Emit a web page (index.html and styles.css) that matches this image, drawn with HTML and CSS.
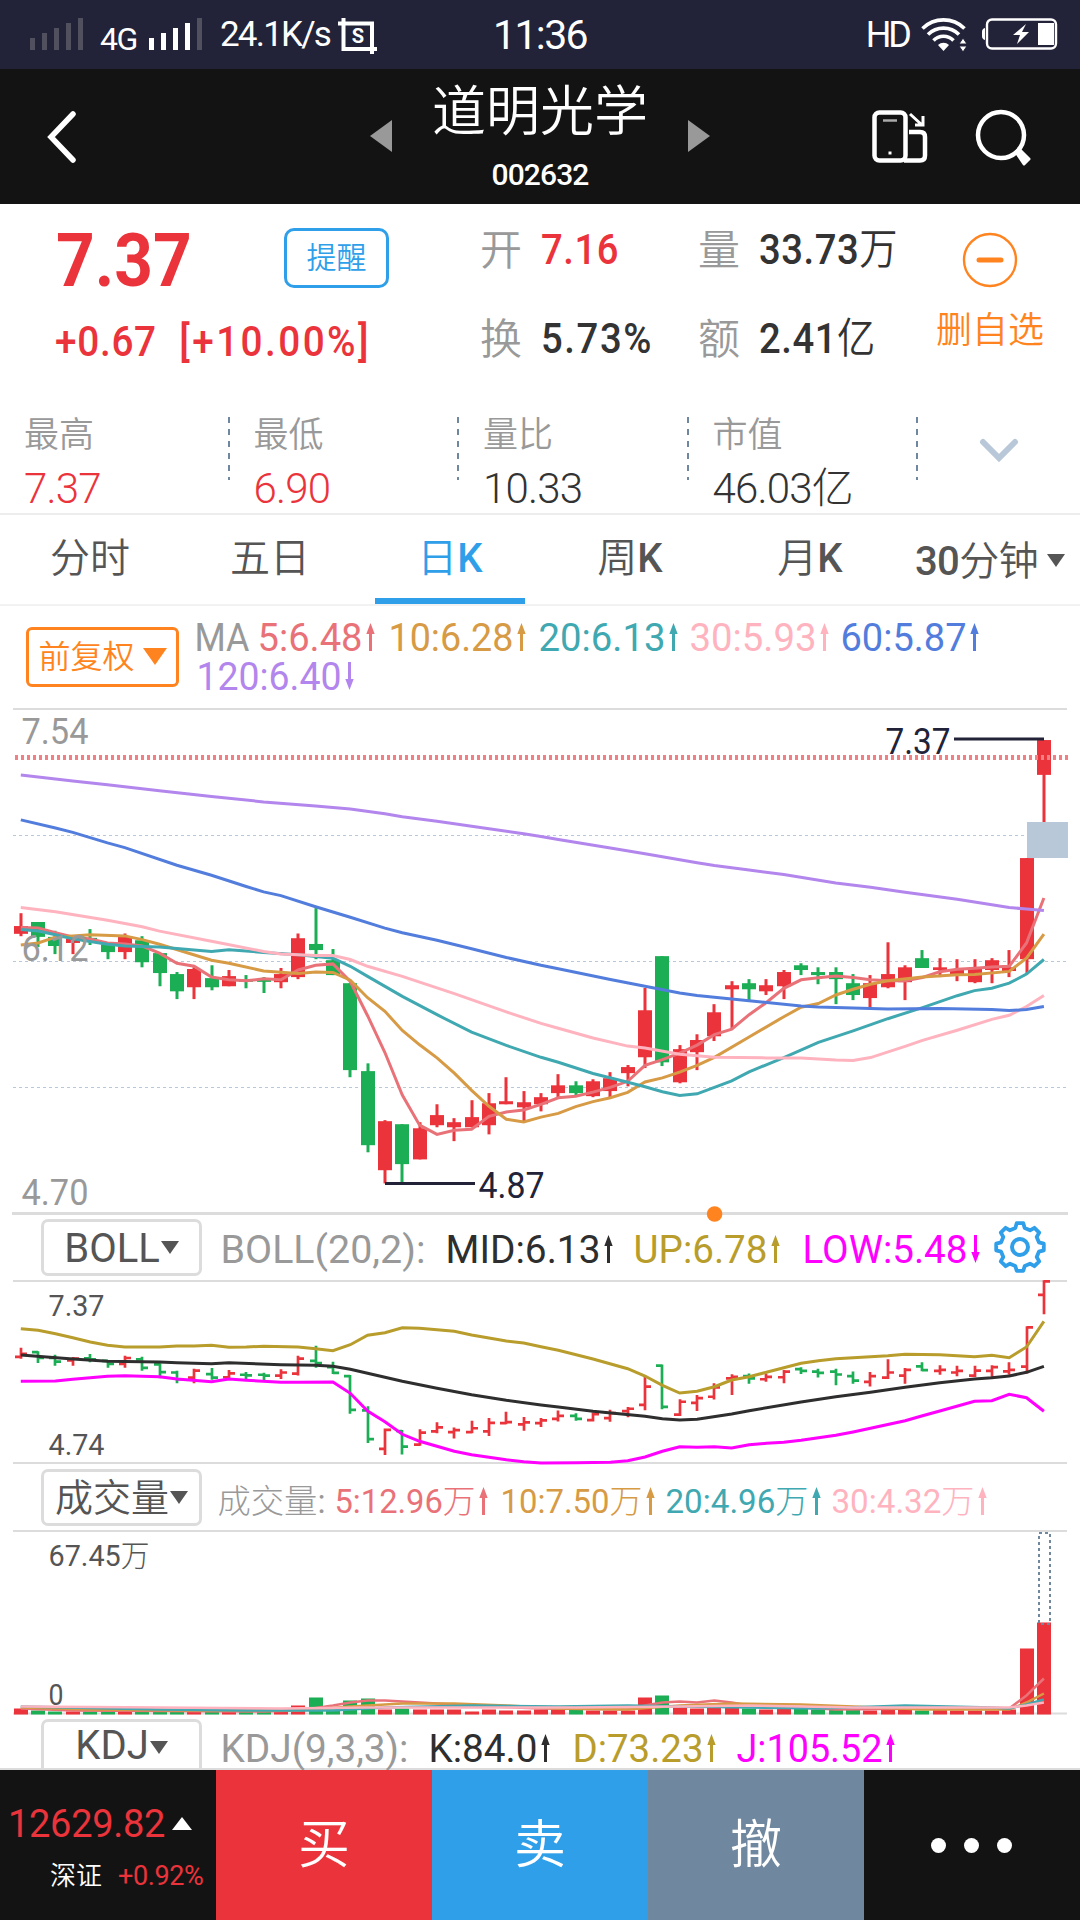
FILE: index.html
```html
<!DOCTYPE html>
<html lang="zh-CN">
<head>
    <meta charset="UTF-8">
    <meta name="viewport" content="width=device-width, initial-scale=1.0">
    <title>道明光学 002632</title>
    <link rel="stylesheet" href="styles.css">
</head>
<body>
    <div class="status-bar">
        <div class="status-left">
            <div class="signal off"><i></i><i></i><i></i><i></i><i></i></div>
            <span class="net">4G</span>
            <div class="signal"><i></i><i></i><i></i><i></i><i class="dim"></i></div>
            <span class="speed">24.1K/s</span>
            <svg class="crop-icon" width="40" height="36" viewBox="0 0 40 36">
                <path d="M0 5.500H34V36M5.500 0V31H39" fill="none" stroke="#fff" stroke-width="4"/>
                <text x="20" y="25" text-anchor="middle">S</text>
            </svg>
        </div>
        <span class="clock">11:36</span>
        <div class="status-right">
            <span class="hd">HD</span>
            <svg width="48" height="34" viewBox="0 0 48 34">
                <g fill="none" stroke="#fff" stroke-width="3.6">
                    <path d="M1.500 10.500a30 30 0 0 1 42 0"/>
                    <path d="M7 16.500a22 22 0 0 1 31 0"/>
                    <path d="M12.500 22.500a14 14 0 0 1 20 0"/>
                </g>
                <path d="M17 27a8 8 0 0 1 11 0l-5.500 6z" fill="#fff"/>
                <path d="M38 26l4-6 4 6zM38 28h8l-4 6z" fill="#fff" stroke="#222238" stroke-width="1"/>
            </svg>
            <svg width="77" height="32" viewBox="0 0 77 32">
                <rect x="6" y="1.500" width="69" height="29" rx="5" fill="none" stroke="#fff" stroke-width="2.400"/>
                <path d="M4 10v12a4 4 0 0 1-3-4v-4a4 4 0 0 1 3-4z" fill="#fff"/>
                <path d="M45 6L32 17h7l-3 9 12-12h-7z" fill="#fff"/>
                <rect x="57" y="5" width="16" height="22" fill="#fff"/>
            </svg>
        </div>
    </div>

    <header class="title-bar">
        <svg class="back" width="34" height="54" viewBox="0 0 34 54"><path d="M28 4L6 27l22 23" fill="none" stroke="#fff" stroke-width="5.500" stroke-linecap="round"/></svg>
        <div class="stock-switch">
            <svg width="22" height="32" viewBox="0 0 22 32"><path d="M0 16L22 0v32z" fill="#999"/></svg>
            <div class="stock-title">
                <h1>道明光学</h1>
                <span class="code">002632</span>
            </div>
            <svg width="22" height="32" viewBox="0 0 22 32"><path d="M22 16L0 0v32z" fill="#999"/></svg>
        </div>
        <div class="tools">
            <svg width="56" height="54" viewBox="0 0 56 54" fill="none" stroke="#fff" stroke-width="4.500">
                <rect x="2.500" y="2.500" width="31" height="48" rx="5"/>
                <path d="M37 22h11q5 0 5 5v18.500q0 5-5 5H32"/>
                <path d="M38 4l12 11M43 15h8V6" stroke-width="3"/>
                <path d="M11 10.500h14" stroke="#aaa" stroke-width="2.500"/>
                <path d="M16.500 43h3" stroke-width="3"/>
            </svg>
            <svg width="58" height="58" viewBox="0 0 58 58">
                <circle cx="25" cy="25" r="23" fill="none" stroke="#fff" stroke-width="4.500"/>
                <path d="M40 42l3-3 10 10-5 5z" fill="#fff" stroke="#fff" stroke-width="3" stroke-linejoin="round"/>
            </svg>
        </div>
    </header>

    <section class="quote">
        <div class="quote-main">
            <div class="price-box">
                <div class="price-line">
                    <span class="price num">7.37</span>
                    <button class="remind">提醒</button>
                </div>
                <div class="change num"><span>+0.67</span><span class="pct">[+10.00%]</span></div>
            </div>
            <dl class="facts">
                <dt>开</dt><dd class="red">7.16</dd>
                <dt>量</dt><dd>33.73<b>万</b></dd>
                <dt>换</dt><dd>5.73%</dd>
                <dt>额</dt><dd>2.41<b>亿</b></dd>
            </dl>
            <div class="remove">
                <svg width="56" height="56" viewBox="0 0 56 56"><circle cx="28" cy="28" r="26" fill="none" stroke="#ff8420" stroke-width="2.400"/><path d="M17 28h22" stroke="#ff8420" stroke-width="5" stroke-linecap="round"/></svg>
                <span>删自选</span>
            </div>
        </div>
        <div class="quote-more">
            <div class="more-item"><span>最高</span><em class="red">7.37</em></div>
            <div class="more-item"><span>最低</span><em class="red">6.90</em></div>
            <div class="more-item"><span>量比</span><em>10.33</em></div>
            <div class="more-item"><span>市值</span><em>46.03亿</em></div>
            <svg class="expand" width="40" height="26" viewBox="0 0 40 26"><path d="M4 4l16 16L36 4" fill="none" stroke="#b9c8d8" stroke-width="6" stroke-linecap="round"/></svg>
        </div>
    </section>

    <nav class="tabs">
        <a>分时</a>
        <a>五日</a>
        <a class="active">日<b>K</b></a>
        <a>周<b>K</b></a>
        <a>月<b>K</b></a>
        <a class="period"><b>30</b>分钟<i class="caret"></i></a>
    </nav>

    <main>
        <div class="ma-row">
            <button class="adjust">前复权<i class="caret"></i></button>
            <svg id="maLegend" width="890" height="102" viewBox="190 606 890 102"></svg>
        </div>
        <svg id="kline" width="1080" height="509" viewBox="0 708 1080 509"></svg>

        <div class="ind-row">
            <button class="ind-select">BOLL<i class="caret"></i></button>
            <svg id="bollLegend" width="870" height="63" viewBox="210 1217 870 63"></svg>
        </div>
        <svg id="boll" width="1080" height="187" viewBox="0 1280 1080 187"></svg>

        <div class="ind-row">
            <button class="ind-select zh">成交量<i class="caret"></i></button>
            <svg id="volLegend" width="870" height="63" viewBox="210 1467 870 63"></svg>
        </div>
        <svg id="volume" width="1080" height="187" viewBox="0 1530 1080 187"></svg>

        <div class="ind-row last">
            <button class="ind-select">KDJ<i class="caret"></i></button>
            <svg id="kdjLegend" width="870" height="51" viewBox="210 1717 870 51"></svg>
        </div>
    </main>

    <footer class="trade-bar">
        <div class="index">
            <div class="index-value"><span>12629.82</span><i></i></div>
            <div class="index-name"><span>深证</span><em>+0.92%</em></div>
        </div>
        <button class="buy">买</button>
        <button class="sell">卖</button>
        <button class="cancel">撤</button>
        <div class="dots"><i></i><i></i><i></i></div>
    </footer>

    <script src="chart.js"></script>
</body>
</html>
```
FILE: styles.css
```css
* {
    box-sizing: border-box;
}
body {
    margin: 0;
    width: 1080px;
    height: 1920px;
    overflow: hidden;
    background: #fff;
    color: #333;
    font-family: Roboto, "Noto Sans CJK SC", sans-serif;
}
svg {
    display: block;
    flex: none;
    overflow: visible;
}
button {
    margin: 0;
    padding: 0;
    border: 0;
    background: none;
    font-family: inherit;
    font-weight: 350;
}
i, em {
    font-style: normal;
}
.red {
    color: #eb333b;
}
.caret {
    display: inline-block;
    border: 9px solid transparent;
    border-top: 13px solid currentColor;
    border-bottom: 0;
}

/* status bar */
.status-bar {
    display: grid;
    grid-template-columns: 1fr auto 1fr;
    height: 69px;
    background: #222238;
    color: #fff;
}
.status-left {
    display: flex;
    padding-left: 30px;
}
.signal {
    display: flex;
    align-items: flex-end;
    gap: 7px;
    height: 50px;
}
.signal i {
    width: 5px;
    height: 12px;
    background: #fff;
}
.signal i:nth-child(2) { height: 17px; }
.signal i:nth-child(3) { height: 22px; }
.signal i:nth-child(4) { height: 27px; }
.signal i:nth-child(5) { height: 32px; }
.signal.off i,
.signal .dim {
    background: #50505f;
}
.net {
    width: 49px;
    margin-left: 17px;
    padding-top: 20px;
    font-size: 32px;
    line-height: 38px;
    letter-spacing: -1.5px;
}
.speed {
    width: 118px;
    margin-left: 18px;
    padding-top: 15px;
    font-size: 35px;
    line-height: 40px;
    letter-spacing: -1.8px;
}
.crop-icon {
    margin-top: 18px;
}
.crop-icon text {
    font-size: 20px;
    font-weight: 700;
    fill: #fff;
}
.clock {
    padding-top: 12px;
    font-size: 41px;
    line-height: 47px;
    letter-spacing: -1.6px;
}
.status-right {
    display: flex;
    justify-content: flex-end;
    padding: 18px 22px 0 0;
    gap: 12px;
}
.hd {
    margin-top: -4px;
    font-size: 36px;
    line-height: 42px;
    letter-spacing: -3px;
}

/* title bar */
.title-bar {
    display: flex;
    justify-content: space-between;
    height: 135px;
    padding: 0 46px 0 45px;
    background: #131313;
    color: #fff;
}
.back {
    margin-top: 41px;
}
.stock-switch {
    display: flex;
    justify-content: space-between;
    width: 340px;
    margin-left: 129px;
}
.stock-switch > svg {
    margin-top: 51px;
}
.stock-title {
    text-align: center;
}
.stock-title h1 {
    margin: 8px 0 0;
    font-size: 54px;
    font-weight: 350;
    line-height: 72px;
}
.code {
    display: block;
    margin-top: 8px;
    font-size: 30px;
    font-weight: 500;
    line-height: 36px;
    letter-spacing: -.9px;
}
.tools {
    display: flex;
    gap: 48px;
    padding-top: 41px;
}

/* quote */
.quote {
    height: 309px;
}
.quote-main {
    display: flex;
    height: 204px;
}
.price-box {
    width: 480px;
    padding: 14px 0 0 56px;
    color: #eb333b;
}
.price-line {
    display: flex;
    height: 84px;
}
.num {
    transform: scaleX(.9);
    transform-origin: 0 50%;
}
.price {
    width: 228px;
    font-size: 75px;
    font-weight: 700;
    line-height: 84px;
}
.remind {
    width: 105px;
    height: 60px;
    margin-top: 10px;
    border: 3px solid #309fea;
    border-radius: 10px;
    color: #309fea;
    font-size: 30px;
    line-height: 52px;
}
.change {
    display: flex;
    margin: 14px 0 0 -1px;
    font-size: 43px;
    font-weight: 500;
    line-height: 50px;
    letter-spacing: .8px;
    white-space: nowrap;
}
.change .pct {
    margin-left: 25px;
    letter-spacing: 2.7px;
}
.facts {
    display: grid;
    grid-template-columns: 61px 157px 61px 161px;
    grid-template-rows: 89px 89px;
    width: 440px;
    margin: 0;
}
.facts dt,
.facts dd {
    margin: 0;
    padding-top: 15px;
    font-size: 42px;
    line-height: 62px;
    white-space: nowrap;
}
.facts dt {
    padding-top: 16px;
    color: #999;
    font-weight: 350;
}
.facts dd {
    font-weight: 500;
    letter-spacing: .6px;
    transform: scaleX(.91);
    transform-origin: 0 50%;
}
.facts b {
    font-weight: 350;
}
.facts dd:nth-of-type(3) {
    letter-spacing: 1.8px;
}
.remove {
    display: flex;
    flex-direction: column;
    align-items: center;
    width: 140px;
    padding-top: 28px;
    color: #ff8420;
    font-size: 36px;
    font-weight: 350;
    line-height: 52px;
}
.remove span {
    margin-top: 17px;
}
.quote-more {
    display: flex;
    height: 105px;
}
.more-item {
    width: 229.500px;
    height: 73px;
    padding-left: 24px;
    background: repeating-linear-gradient(#70889f 0 6px, transparent 6px 12px) 100% 9px / 2px 63px no-repeat;
}
.more-item span {
    display: block;
    padding-top: 4px;
    color: #999;
    font-size: 35px;
    font-weight: 350;
    line-height: 48px;
}
.more-item em {
    display: block;
    padding-top: 2px;
    font-size: 42px;
    font-weight: 300;
    line-height: 54px;
    letter-spacing: -.8px;
    white-space: nowrap;
}
.expand {
    margin: 30px 0 0 61px;
}

/* period tabs */
.tabs {
    display: flex;
    height: 93px;
    border-top: 2px solid #ededed;
    border-bottom: 2px solid #f2f2f2;
    color: #555;
}
.tabs a {
    display: flex;
    justify-content: center;
    width: 180px;
    padding-top: 12px;
    font-size: 40px;
    font-weight: 350;
    line-height: 64px;
    white-space: nowrap;
}
.tabs b {
    font-weight: 500;
}
.tabs .active {
    width: 150px;
    margin: 0 15px;
    border-bottom: 6px solid #309fea;
    color: #309fea;
}
.tabs .period {
    padding-top: 15px;
    letter-spacing: -.6px;
}
.period .caret {
    align-self: flex-start;
    margin: 24px 0 0 9px;
}

/* charts */
.ma-row {
    display: flex;
    height: 102px;
    padding-left: 26px;
}
.adjust {
    width: 153px;
    height: 60px;
    margin: 21px 11px 0 0;
    border: 3px solid #ff8420;
    border-radius: 6px;
    color: #ff8420;
    font-size: 32px;
    line-height: 54px;
    white-space: nowrap;
}
.adjust .caret {
    margin: 0 0 3px 8px;
    border-width: 17px 12px 0;
}
.ind-row {
    display: flex;
    height: 63px;
    padding: 2px 0 0 41px;
}
.ind-row svg {
    margin-top: -2px;
}
.ind-select {
    flex: none;
    display: flex;
    justify-content: center;
    width: 161px;
    height: 57px;
    margin-right: 8px;
    border: 3px solid #dcdcdc;
    border-radius: 7px;
    color: #555;
    font-size: 40px;
    font-weight: 400;
    line-height: 54px;
}
.ind-select .caret {
    margin: 19px 0 0 1px;
}
.ind-select.zh {
    font-size: 38px;
    font-weight: 350;
    line-height: 52px;
}
.ind-row.last {
    height: 53px;
    border-bottom: 2px solid #dcdcdc;
}
.last .ind-select {
    height: 49px;
    border-bottom: 0;
    border-radius: 7px 7px 0 0;
    line-height: 48px;
}
svg text {
    font-family: Roboto, "Noto Sans CJK SC", sans-serif;
}
svg .cjk {
    font-weight: 300;
}

/* bottom bar */
.trade-bar {
    display: grid;
    grid-template-columns: repeat(5, 216px);
    height: 150px;
    background: #131313;
    color: #fff;
}
.trade-bar button {
    color: #fff;
    font-size: 52px;
    line-height: 152px;
}
.buy { background: #eb333b; }
.sell { background: #309fea; }
.cancel { background: #70889f; }
.index-value {
    display: flex;
    padding: 31px 0 0 8px;
    color: #eb333b;
    font-size: 38px;
    line-height: 46px;
}
.index-value span {
    width: 164px;
    letter-spacing: -.3px;
}
.index-value i {
    height: 0;
    margin-top: 16px;
    border: 10px solid transparent;
    border-top: 0;
    border-bottom: 13px solid #fff;
}
.index-name {
    display: flex;
    padding: 9px 0 0 50px;
    font-size: 26px;
    line-height: 40px;
}
.index-name span {
    width: 68px;
    font-weight: 350;
}
.index-name em {
    color: #eb333b;
    font-size: 27px;
    letter-spacing: -.4px;
}
.dots {
    display: flex;
    justify-content: center;
    align-items: center;
    gap: 18px;
    padding: 0 2px 2px 0;
}
.dots i {
    width: 15px;
    height: 15px;
    border-radius: 50%;
    background: #fff;
}
```
FILE: chart.js
```javascript
const RED = '#eb333b', GREEN = '#1bae54';
const COLORS = { ma5: '#e97279', ma10: '#d79a45', ma20: '#40a8b0', ma30: '#ffb3bf', ma60: '#527ddc', ma120: '#b286ec' };
const NS = 'http://www.w3.org/2000/svg';

// [up, high, body top, body bottom, low], levels counted down from the top of the scale
const bars = [
    [1,660,698,721,728],[0,686,686,730,760],[0,712,730,757,781],[1,730,735,748,781],[0,707,733,740,754],
    [0,752,752,775,796],[1,720,730,775,796],[0,728,740,805,820],[0,778,778,837,876],[0,834,840,891,914],
    [1,820,825,879,914],[0,814,852,879,888],[1,828,846,876,876],[0,843,857,862,882],[0,849,857,863,896],
    [1,822,840,864,882],[1,720,734,849,855],[0,645,751,769,796],[0,766,799,843,843],[0,867,867,1124,1145],
    [0,1104,1127,1346,1367],[1,1272,1275,1420,1459],[0,1284,1284,1402,1455],[1,1278,1296,1388,1388],[1,1225,1257,1287,1293],
    [1,1266,1278,1293,1334],[1,1213,1263,1293,1293],[1,1192,1222,1287,1314],[1,1145,1216,1225,1225],[1,1186,1219,1234,1275],
    [1,1192,1204,1225,1246],[1,1136,1169,1192,1204],[0,1157,1169,1192,1199],[1,1151,1157,1201,1204],[1,1130,1148,1186,1206],
    [1,1109,1115,1133,1172],[1,881,947,1086,1118],[0,787,787,1101,1112],[1,1050,1062,1160,1163],[1,1018,1035,1071,1124],
    [1,929,953,1024,1038],[1,861,873,885,1003],[0,855,867,885,917],[1,855,873,891,902],[1,828,834,876,914],
    [0,808,814,828,843],[0,820,834,843,870],[0,820,834,855,929],[0,840,867,902,917],[1,843,867,911,938],
    [1,746,840,879,882],[1,814,820,864,917],[0,769,793,822,822],[1,793,820,828,849],[1,796,828,840,861],
    [1,796,825,864,867],[1,793,799,828,867],[1,769,820,831,849],[1,497,497,796,840],[1,148,148,251,391]
];

// index:level pairs, straight between the given points
const ma = {
    ma5: '0:702 1:704 2:718 3:730 4:736 5:748 6:751 7:757 8:778 9:808 10:817 11:849 12:857 13:860 14:854 15:857 16:828 17:814 18:810 19:862 20:963 21:1072 22:1198 23:1287 24:1314 25:1302 26:1299 27:1261 28:1248 29:1242 30:1225 31:1206 32:1201 33:1189 34:1175 35:1157 36:1110 37:1093 38:1074 39:1050 40:1019 41:1003 42:960 43:924 44:882 45:857 46:851 47:846 48:850 49:857 50:860 51:860 52:850 53:833 54:826 55:823 56:819 57:817 58:748 59:615',
    ma10: '0:754 1:748 2:731 3:727 4:724 6:727 7:738 8:752 11:799 12:808 14:831 16:838 17:834 18:835 19:858 20:910 21:950 22:1007 23:1049 24:1088 25:1133 26:1184 27:1231 28:1269 29:1277 30:1263 31:1252 32:1232 33:1217 34:1206 35:1190 36:1159 37:1147 38:1130 39:1110 40:1086 42:1026 44:966 45:938 46:927 47:902 48:885 49:870 50:860 52:849 54:842 55:841 57:832 58:793 59:722',
    ma20: '0:708 1:713 2:724 3:736 5:752 6:757 8:760 11:773 12:768 14:776 16:783 17:788 18:793 19:817 20:847 22:906 24:960 26:1012 28:1051 30:1086 31:1101 33:1134 35:1160 36:1173 37:1188 38:1199 39:1194 40:1175 41:1156 42:1129 44:1087 46:1042 48:1008 50:972 52:939 54:904 55:889 56:882 57:867 58:840 59:797',
    ma30: '0:643 2:656 5:681 7:700 8:713 11:743 14:773 15:781 17:785 18:785 19:797 20:817 22:847 25:898 28:952 30:986 31:1000 33:1029 35:1053 36:1059 38:1077 40:1086 43:1088 45:1088 47:1094 48:1096 49:1087 51:1054 52:1036 54:1006 56:974 57:962 58:936 59:903',
    ma60: '0:384 2:408 3:421 5:452 6:466 9:518 11:548 13:581 14:597 15:608 17:641 19:672 21:704 22:718 24:740 26:765 28:791 30:814 31:824 34:856 36:876 38:896 39:903 42:919 45:934 46:937 50:943 53:942 56:945 57:948 58:945 59:936',
    ma120: '0:251 3:269 5:280 8:298 11:315 14:331 17:343 19:352 21:366 22:375 24:388 27:410 29:425 30:433 31:442 34:467 36:484 37:493 39:511 40:519 42:532 44:546 47:571 49:583 51:598 54:619 57:643 58:648 59:652'
};

const bollLines = [
    ['#2e2e2e', '0:435 3:447 5:454 8:456 9:458 11:461 12:458 15:464 17:466 18:469 19:478 20:490 22:514 24:535 26:554 28:571 30:585 31:591 33:604 36:619 37:626 38:630 39:628 41:612 42:602 45:576 47:560 49:547 51:532 53:518 55:507 56:503 57:498 58:487 59:469'],
    ['#b89d2c', '0:356 1:361 2:371 3:383 4:396 5:406 6:411 8:411 9:408 10:408 11:406 12:412 13:411 14:409 16:411 17:416 18:422 19:404 20:376 21:368 22:353 23:355 25:364 26:375 28:393 29:399 30:410 31:421 33:447 35:476 36:498 37:526 38:549 39:544 40:530 41:510 42:500 43:487 44:473 45:460 46:452 47:446 50:437 51:433 53:434 55:440 56:436 57:443 58:411 59:334'],
    ['#ff00ff', '0:514 2:513 3:508 5:499 6:497 8:500 9:507 11:515 12:507 13:511 15:517 16:517 18:516 19:550 20:603 21:635 22:673 23:694 25:724 26:734 28:749 29:755 30:759 32:758 34:757 35:752 36:741 37:724 38:710 39:712 40:710 41:714 42:704 43:700 44:697 45:691 47:676 48:666 49:655 51:632 52:617 53:603 55:574 56:572 57:553 58:563 59:604']
];

// bar heights in px
const volumes = [
    6,4,3,3,3,3,3,3,3,3,3,3,3,3,3,3,9,17,5,14,16,5,6,5,5,5,3,5,4,4,
    5,5,5,4,4,4,17,19,7,6,7,7,6,5,6,7,5,5,5,4,5,5,4,5,4,4,4,5,66,92
];
const volLines = [
    ['ma5', '0:6 3:4 14:3 16:4 18:9 19:12 20:14 21:14 22:13 24:11 27:8 30:6 35:5 36:9 37:12 38:13 39:12 40:14 41:12 42:9 45:7 47:5 52:6 57:6 58:19 59:36'],
    ['ma10', '0:7 4:5 10:4 16:4 19:8 22:11 25:11 28:9 31:6 35:5 38:9 41:11 45:10 48:8 52:5 57:5 58:12 59:21'],
    ['ma20', '0:8 8:5 13:4 18:4 21:7 26:9 31:8 35:9 38:8 42:7 46:6 51:9 56:7 57:6 58:10 59:15'],
    ['ma30', '0:8 8:7 15:6 20:7 26:7 32:7 38:8 42:9 48:7 54:7 57:7 58:9 59:12']
];

const x = i => 20.8 + i * 17.34;
const yPrice = v => 690 + v / 2.957;
const price = v => 7.6466 - 0.0019035 * v;
const yBoll = p => 1281 + (7.37 - p) / 2.63 * 182;

function add(svg, tag, attrs) {
    const el = document.createElementNS(NS, tag);
    for (const k in attrs) el.setAttribute(k, attrs[k]);
    svg.appendChild(el);
    return el;
}

function rule(svg, x1, x2, y, color, width, dash) {
    add(svg, 'line', { x1, x2, y1: y, y2: y, stroke: color, 'stroke-width': width, 'stroke-dasharray': dash || 'none' });
}

function curve(svg, data, color, toY, width) {
    const points = data.split(' ').map(s => {
        const [i, v] = s.split(':');
        return x(+i).toFixed(1) + ',' + toY(+v).toFixed(1);
    }).join(' ');
    add(svg, 'polyline', { points, fill: 'none', stroke: color, 'stroke-width': width || 3 });
}

// text stretched to the run from x1 to x2
function label(svg, str, x1, x2, y, size, color, weight) {
    const t = add(svg, 'text', {
        x: x1 - 1.5, y, fill: color, 'font-size': size, 'font-weight': weight || 400,
        textLength: x2 - x1 + 3, lengthAdjust: 'spacingAndGlyphs'
    });
    str.split(/([\u4e00-\u9fa5]+)/).filter(Boolean).forEach(part => {
        const span = add(t, 'tspan', /[\u4e00-\u9fa5]/.test(part) ? { class: 'cjk' } : {});
        span.textContent = part;
    });
}

function arrow(svg, cx, top, color, down) {
    const h = 28;
    const d = down
        ? `M${cx - 1.5} ${top}h3v${h - 11}h2.700l-4.2 11l-4.200 -11h2.700z`
        : `M${cx - 1.5} ${top + h}h3v${-(h - 11)}h2.700l-4.2 -11l-4.200 11h2.700z`;
    add(svg, 'path', { d, fill: color });
}

function legend(svg, items, base, size) {
    items.forEach(([str, x1, x2, color, dir, weight]) => {
        label(svg, str, x1, x2, base, size, color, weight);
        if (dir) arrow(svg, x2 + 9.500, base - 28 + (size < 38 ? 2 : 0), color, dir < 0);
    });
}

function drawKline() {
    const svg = document.getElementById('kline');
    rule(svg, 13, 1067, 709, '#dcdcdc', 2);
    [835.5, 961.5, 1087.5].forEach(y => rule(svg, 13, 1067, y, '#b9c8d8', 1, '3 3'));
    rule(svg, 12, 1068, 1213.5, '#dcdcdc', 3);
    bars.forEach(([up, hi, top, bottom, lo], i) => {
        const fill = up ? RED : GREEN;
        const cx = Math.round(x(i));
        add(svg, 'rect', { x: cx - 1.500, y: yPrice(hi), width: 3, height: yPrice(lo) - yPrice(hi), fill });
        add(svg, 'rect', { x: cx - 7, y: yPrice(top), width: 14, height: Math.max(2, yPrice(bottom) - yPrice(top)), fill });
    });
    add(svg, 'rect', { x: 1027, y: 822, width: 41, height: 36, fill: '#b9c8d8' });
    ['ma5', 'ma10', 'ma20', 'ma30', 'ma60', 'ma120'].forEach(k => curve(svg, ma[k], COLORS[k], yPrice));
    label(svg, '7.54', 23, 87, 744, 36, '#999', 450);
    label(svg, '6.12', 23, 87, 961, 36, '#999', 450);
    label(svg, '4.70', 23, 87, 1205, 36, '#999', 450);
    label(svg, '7.37', 887, 949, 754, 36, '#222238', 450);
    rule(svg, 954, 1044, 739, '#222238', 3);
    label(svg, '4.87', 480, 543, 1198, 36, '#222238', 450);
    rule(svg, 385, 475, 1183.5, '#222238', 3);
    rule(svg, 15, 1068, 757.5, '#ef8083', 5, '3 3');
    add(svg, 'circle', { cx: 714.6, cy: 1214, r: 7.800, fill: '#ff8420' });
}

function drawBoll() {
    const svg = document.getElementById('boll');
    rule(svg, 13, 1067, 1281, '#dcdcdc', 2);
    rule(svg, 13, 1067, 1463, '#dcdcdc', 2);
    bars.forEach(([up, hi, top, bottom, lo], i) => {
        const cx = Math.round(x(i));
        const [h, t, b, l] = [hi, top, bottom, lo].map(v => yBoll(price(v)));
        const open = up ? b : t, close = up ? t : b;
        add(svg, 'path', {
            d: `M${cx} ${h - 1}V${l + 1}M${cx - 6} ${open}H${cx}M${cx} ${close}H${cx + 6}`,
            stroke: up ? RED : GREEN, 'stroke-width': 2.700
        });
    });
    bollLines.forEach(([color, data]) => curve(svg, data, color, v => 1210 + v / 3));
    label(svg, '7.37', 50, 103, 1316, 30, '#555');
    label(svg, '4.74', 50, 103, 1455, 30, '#555');
}

function drawVolume() {
    const svg = document.getElementById('volume');
    rule(svg, 13, 1067, 1531, '#dcdcdc', 2);
    rule(svg, 13, 1067, 1713.5, '#dcdcdc', 2);
    volumes.forEach((h, i) => {
        add(svg, 'rect', { x: Math.round(x(i)) - 7, y: 1714.5 - h, width: 14, height: h, fill: bars[i][0] ? RED : GREEN });
    });
    add(svg, 'rect', { x: 1039, y: 1533, width: 11, height: 91, fill: 'none', stroke: '#70889f', 'stroke-width': 2, 'stroke-dasharray': '3 3' });
    volLines.forEach(([k, data]) => curve(svg, data, COLORS[k], v => 1714.5 - v, 2.500));
    label(svg, '67.45万', 50, 148, 1566, 30, '#555');
    label(svg, '0', 50, 62, 1705, 30, '#555');
}

function drawGear(svg, cx, cy) {
    const pts = [];
    for (let k = 0; k < 8; k++) {
        [[-14, 19.5], [-8, 24], [8, 24], [14, 19.5]].forEach(([da, r]) => {
            const a = (k * 45 + da) * Math.PI / 180;
            pts.push((cx + r * Math.cos(a)).toFixed(1) + ',' + (cy + r * Math.sin(a)).toFixed(1));
        });
    }
    add(svg, 'polygon', { points: pts.join(' '), fill: 'none', stroke: '#309fea', 'stroke-width': 3.800, 'stroke-linejoin': 'round' });
    add(svg, 'circle', { cx, cy, r: 8, fill: 'none', stroke: '#309fea', 'stroke-width': 4 });
}

const maLegend = document.getElementById('maLegend');
legend(maLegend, [
    ['MA', 196, 248, '#999', 0],
    ['5:6.48', 259, 361, COLORS.ma5, 1],
    ['10:6.28', 390, 512, COLORS.ma10, 1],
    ['20:6.13', 540, 664, COLORS.ma20, 1],
    ['30:5.93', 691, 815, COLORS.ma30, 1],
    ['60:5.87', 842, 965, COLORS.ma60, 1]
], 651, 39);
legend(maLegend, [['120:6.40', 198, 340, COLORS.ma120, -1]], 690, 39);

const bollLegend = document.getElementById('bollLegend');
legend(bollLegend, [
    ['BOLL(20,2):', 222, 424, '#999', 0],
    ['MID:6.13', 447, 599, '#2e2e2e', 1, 450],
    ['UP:6.78', 635, 766, '#b89d2c', 1],
    ['LOW:5.48', 804, 966, '#ff00ff', -1]
], 1263, 39);
drawGear(bollLegend, 1020, 1247);

legend(document.getElementById('volLegend'), [
    ['成交量:', 219, 324, '#999', 0],
    ['5:12.96万', 336, 474, COLORS.ma5, 1],
    ['10:7.50万', 502, 641, COLORS.ma10, 1],
    ['20:4.96万', 667, 807, COLORS.ma20, 1],
    ['30:4.32万', 833, 973, COLORS.ma30, 1]
], 1513, 33);

legend(document.getElementById('kdjLegend'), [
    ['KDJ(9,3,3):', 222, 407, '#999', 0],
    ['K:84.0', 430, 536, '#2e2e2e', 1, 450],
    ['D:73.23', 574, 702, '#b89d2c', 1],
    ['J:105.52', 738, 881, '#ff00ff', 1]
], 1762, 39);

drawKline();
drawBoll();
drawVolume();
```
